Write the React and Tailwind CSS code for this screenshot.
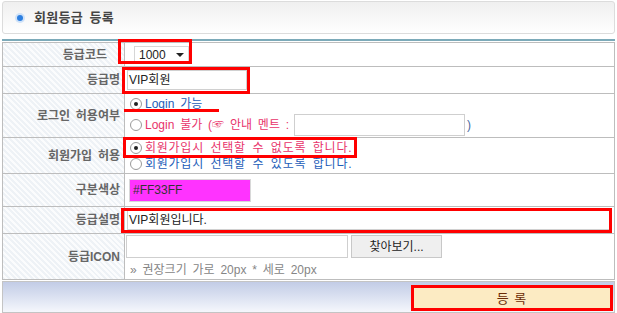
import React from "react";

const font = "font-['Liberation_Sans','Noto_Sans_CJK_KR',sans-serif]";
const labelBg =
  "bg-[repeating-linear-gradient(45deg,#eef2f6_0px,#eef2f6_2px,#fbfcfd_2px,#fbfcfd_4px)]";

function Radio({ on }) {
  return (
    <span className="inline-flex w-[12px] h-[12px] rounded-full border border-[#9a9a9a] bg-white items-center justify-center mr-[3px] shrink-0">
      {on && <span className="w-[4px] h-[4px] rounded-full bg-[#222]" />}
    </span>
  );
}

function Row({ label, h, labelClass = "pr-[4px]", children }) {
  return (
    <div className={`flex border-b border-[#bdbdbd] ${h}`}>
      <div
        className={`w-[122px] shrink-0 border-r border-[#bdbdbd] flex items-center justify-end ${labelBg} ${labelClass} text-[12px] font-bold text-[#666]`}
      >
        {label}
      </div>
      <div className="flex-1 min-w-0">{children}</div>
    </div>
  );
}

export default function App() {
  return (
    <div className={`relative w-[617px] h-[313px] bg-white overflow-hidden ${font} leading-none [word-spacing:2.5px]`}>
      <div className="ml-[2px] w-[613px] pt-px">
        {/* title */}
        <div className="h-[33px] rounded-[3px] border border-[#dcdcdc] bg-gradient-to-b from-[#efefef] to-white flex items-center">
          <span className="ml-[14px] w-[6px] h-[6px] rounded-full bg-[#2d7fe0] ring-2 ring-[#cfe2f8]" />
          <span className="ml-[11px] text-[13px] font-bold text-[#444] tracking-[0.3px]">회원등급 등록</span>
        </div>

        <div className="mt-[5px] h-[2px] bg-[#7caab9]" />

        {/* form table */}
        <div className="mt-px border-x border-t border-[#bdbdbd]">
          <Row label="등급코드" h="h-[24px]" labelClass="pr-[17px]">
            <div className="h-full flex items-center pl-[9px]">
              <div className="w-[55px] h-[18px] border border-[#d6d6d6] flex items-center justify-between px-[4px] text-[12px] text-[#222]">
                <span>1000</span>
                <span className="w-0 h-0 border-x-[4px] border-x-transparent border-t-[4px] border-t-[#222]" />
              </div>
            </div>
          </Row>

          <Row label="등급명" h="h-[27px]">
            <div className="h-full flex items-center pl-[2px]">
              <div className="w-[120px] h-[20px] border border-[#d0d0d0] flex items-center pl-[1px] text-[12px] text-[#222]">
                VIP회원
              </div>
            </div>
          </Row>

          <Row label="로그인 허용여부" h="h-[44px]">
            <div className="h-full flex flex-col pl-[5px] text-[12px]">
              <div className="h-[18px] mt-[1px] flex items-center text-[#1d5db8]">
                <Radio on />
                Login 가능
              </div>
              <div className="flex items-center mt-[1px] text-[#e8336b]">
                <Radio />
                <span>Login 불가 (☞ 안내 멘트 :</span>
                <span className="ml-[5px] w-[171px] h-[22px] border border-[#cfcfcf] bg-white" />
                <span className="ml-[2px] text-[#4a6aa0]">)</span>
              </div>
            </div>
          </Row>

          <Row label="회원가입 허용" h="h-[36px]">
            <div className="h-full flex flex-col justify-center gap-[4px] pl-[5px] text-[12px] tracking-[0.75px]">
              <div className="flex items-center text-[#e8336b]">
                <Radio on />
                회원가입시 선택할 수 없도록 합니다.
              </div>
              <div className="flex items-center text-[#1d5db8]">
                <Radio />
                회원가입시 선택할 수 있도록 합니다.
              </div>
            </div>
          </Row>

          <Row label="구분색상" h="h-[33px]">
            <div className="h-full flex items-center pl-[4px]">
              <div className="w-[122px] h-[23px] bg-[#ff33ff] border border-[#d8d8d8] flex items-center pl-[3px] text-[12px] text-[#333]">
                #FF33FF
              </div>
            </div>
          </Row>

          <Row label="등급설명" h="h-[27px]">
            <div className="h-full flex items-center pl-[2px] pr-[4px]">
              <div className="flex-1 h-[20px] border border-[#d0d0d0] flex items-center pl-[1px] text-[12px] text-[#222]">
                VIP회원입니다.
              </div>
            </div>
          </Row>

          <Row label="등급ICON" h="h-[46px]">
            <div className="h-full flex flex-col pl-[1px]">
              <div className="flex mt-[1px] gap-[3px]">
                <div className="w-[222px] h-[23px] border border-[#cfcfcf] bg-white" />
                <div className="w-[91px] h-[23px] border border-[#c8c8c8] bg-[#efefef] flex items-center justify-center text-[12px] text-[#222]">
                  찾아보기...
                </div>
              </div>
              <div className="mt-[6px] pl-[4px] text-[12px] text-[#858585]">» 권장크기 가로 20px * 세로 20px</div>
            </div>
          </Row>
        </div>

        {/* footer */}
        <div className="mt-px h-[32px] border border-[#c4c4c4] bg-gradient-to-b from-[#c2cce6] to-[#f5f7fc] flex justify-end items-start pt-[3px] pr-px">
          <button className="w-[202px] h-[26px] border-[3px] border-[#f00] bg-[#fcebc3] text-[13px] text-[#6a2c05] tracking-[1px]">
            등 록
          </button>
        </div>
      </div>

      {/* red annotation marks */}
      <div className="absolute left-[118px] top-[39px] w-[74px] h-[25px] border-[3px] border-[#f00]" />
      <div className="absolute left-[122px] top-[67px] w-[128px] h-[27px] border-[3px] border-[#f00]" />
      <div className="absolute left-[124px] top-[109px] w-[95px] h-[3px] bg-[#f00]" />
      <div className="absolute left-[123px] top-[137px] w-[234px] h-[21px] border-[3px] border-[#f00]" />
      <div className="absolute left-[121px] top-[208px] w-[491px] h-[25px] border-[3px] border-[#f00]" />
    </div>
  );
}
